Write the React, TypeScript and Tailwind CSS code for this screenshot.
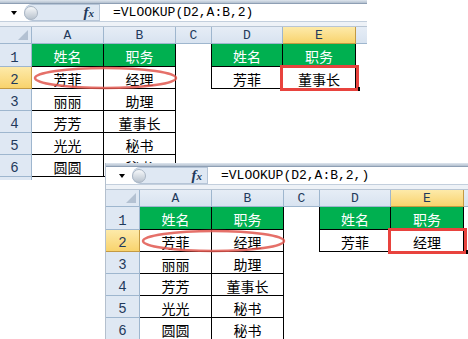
import React from "react";

const names = ["芳菲", "丽丽", "芳芳", "光光", "圆圆"];
const jobs = ["经理", "助理", "董事长", "秘书", "秘书"];

const cjk = "font-['Noto_Sans_CJK_SC',sans-serif] text-[14px]";
const mono = "font-['Liberation_Mono',monospace]";

function HeaderCell({ label, selected }: { label: string; selected?: boolean }) {
  return (
    <div
      className={
        selected
          ? `flex items-end justify-center border-r border-b border-[#c39a43] bg-gradient-to-b from-[#fdeaa9] to-[#f8d36c] pb-[1px] text-[13px] leading-none text-[#1f3a5c] ${mono}`
          : `flex items-end justify-center border-r border-b border-[#9eb6ce] bg-gradient-to-b from-[#e6edf6] to-[#d8e3f0] pb-[1px] text-[13px] leading-none text-[#1f3a5c] ${mono}`
      }
    >
      {label}
    </div>
  );
}

function RowHead({ n, selected }: { n?: number; selected?: boolean }) {
  return (
    <div
      className={
        selected
          ? `flex items-end justify-center border-r border-b border-[#c39a43] bg-gradient-to-b from-[#fdeaa9] to-[#f8d36c] pb-[1px] text-[14px] leading-none text-[#1f3a5c] ${mono}`
          : `flex items-end justify-center border-r border-b border-[#9eb6ce] bg-[#dfe8f3] pb-[1px] text-[14px] leading-none text-[#1f3a5c] ${mono}`
      }
    >
      {n}
    </div>
  );
}

function Cell({ text, green, boxed, rightLine }: { text?: string; green?: boolean; boxed?: boolean; rightLine?: boolean }) {
  let cls = `flex items-center justify-center pt-[2px] leading-none ${cjk}`;
  if (boxed) cls += " border-r border-b border-black";
  if (rightLine) cls += " border-r border-black";
  cls += green ? " bg-[#00b050] text-white" : " bg-white text-black";
  return <div className={cls}>{text}</div>;
}

function Sheet({ formula, lookupName, lookupJob, className }: { formula: string; lookupName: string; lookupJob: string; className: string }) {
  const rows = [1, 2, 3, 4, 5, 6, 7];
  return (
    <div className={`absolute w-[369px] overflow-hidden bg-white ${className}`}>
      <div className="h-[4px] border-b border-[#8e9fb4] bg-gradient-to-b from-[#dfe6ee] to-[#b3c0cf]" />
      <div className="flex h-[18px] border-b border-[#c3cfdd] bg-white">
        <div className="flex w-[26px] items-center">
          <div className="ml-[13px] h-0 w-0 border-x-[3.5px] border-t-[4px] border-x-transparent border-t-black" />
        </div>
        <div className="flex w-[76px] items-center justify-between rounded-l-full border-y border-r border-[#b6c5d7] bg-[#dfe8f3] pr-[5px]">
          <div className="h-[14px] w-[14px] rounded-full border border-[#a9b5c3] bg-gradient-to-b from-[#f7f9fb] to-[#b9c3ce]" />
          <span className="font-['Liberation_Serif',serif] text-[15px] font-bold italic leading-none text-[#22395a]">
            f<span className="text-[11px]">x</span>
          </span>
        </div>
        <div className={`flex flex-1 items-center pl-[13px] text-[13px] leading-none text-black ${mono}`}>{formula}</div>
      </div>
      <div className="h-[5px] border-b border-[#b8c5d4] bg-[#eef2f7]" />
      <div className="grid grid-cols-[34px_72px_72px_36px_71px_73px_1fr] grid-rows-[17px_23px_22px_22px_22px_22px_22px_22px]">
        <div className="relative border-r border-b border-[#9eb6ce] bg-[#dfe8f3]">
          <div className="absolute right-[3px] bottom-[3px] h-0 w-0 border-b-[10px] border-l-[10px] border-b-[#b3c1d2] border-l-transparent" />
        </div>
        <HeaderCell label="A" />
        <HeaderCell label="B" />
        <HeaderCell label="C" />
        <HeaderCell label="D" />
        <HeaderCell label="E" selected />
        <div className="border-b border-[#9eb6ce] bg-gradient-to-b from-[#e6edf6] to-[#d8e3f0]" />
        {rows.map((r) => (
          <React.Fragment key={r}>
            <RowHead n={r <= 6 ? r : undefined} selected={r === 2} />
            {r === 1 ? (
              <>
                <Cell text="姓名" green boxed />
                <Cell text="职务" green boxed />
                <Cell rightLine />
                <Cell text="姓名" green boxed />
                <Cell text="职务" green boxed />
              </>
            ) : r <= 6 ? (
              <>
                <Cell text={names[r - 2]} boxed />
                <Cell text={jobs[r - 2]} boxed />
                {r === 2 ? (
                  <>
                    <Cell rightLine />
                    <Cell text={lookupName} boxed />
                    <Cell text={lookupJob} boxed />
                  </>
                ) : (
                  <>
                    <Cell />
                    <Cell />
                    <Cell />
                  </>
                )}
              </>
            ) : (
              <>
                <Cell />
                <Cell />
                <Cell />
                <Cell />
                <Cell />
              </>
            )}
            <div className="bg-white" />
          </React.Fragment>
        ))}
      </div>
      <svg className="pointer-events-none absolute top-0 left-0" width="369" height="200">
        <ellipse cx="107.5" cy="78" rx="70.5" ry="10" fill="none" stroke="#e0574f" strokeWidth="2.5" opacity="0.85" />
      </svg>
      <div className="absolute top-[65px] left-[282px] h-[26px] w-[79px] border-[3px] border-[#e8433e]" />
      <div className="absolute top-[87px] left-[360px] h-[4px] w-[2px] bg-black" />
    </div>
  );
}

export default function App() {
  return (
    <div className="relative h-[339px] w-[468px] overflow-hidden bg-white">
      <Sheet formula="=VLOOKUP(D2,A:B,2)" lookupName="芳菲" lookupJob="董事长" className="top-0 -left-[2px] h-[180px]" />
      <Sheet formula="=VLOOKUP(D2,A:B,2,)" lookupName="芳菲" lookupJob="经理" className="top-[163px] left-[105px] h-[200px] border-l border-[#b4c0ce]" />
    </div>
  );
}
